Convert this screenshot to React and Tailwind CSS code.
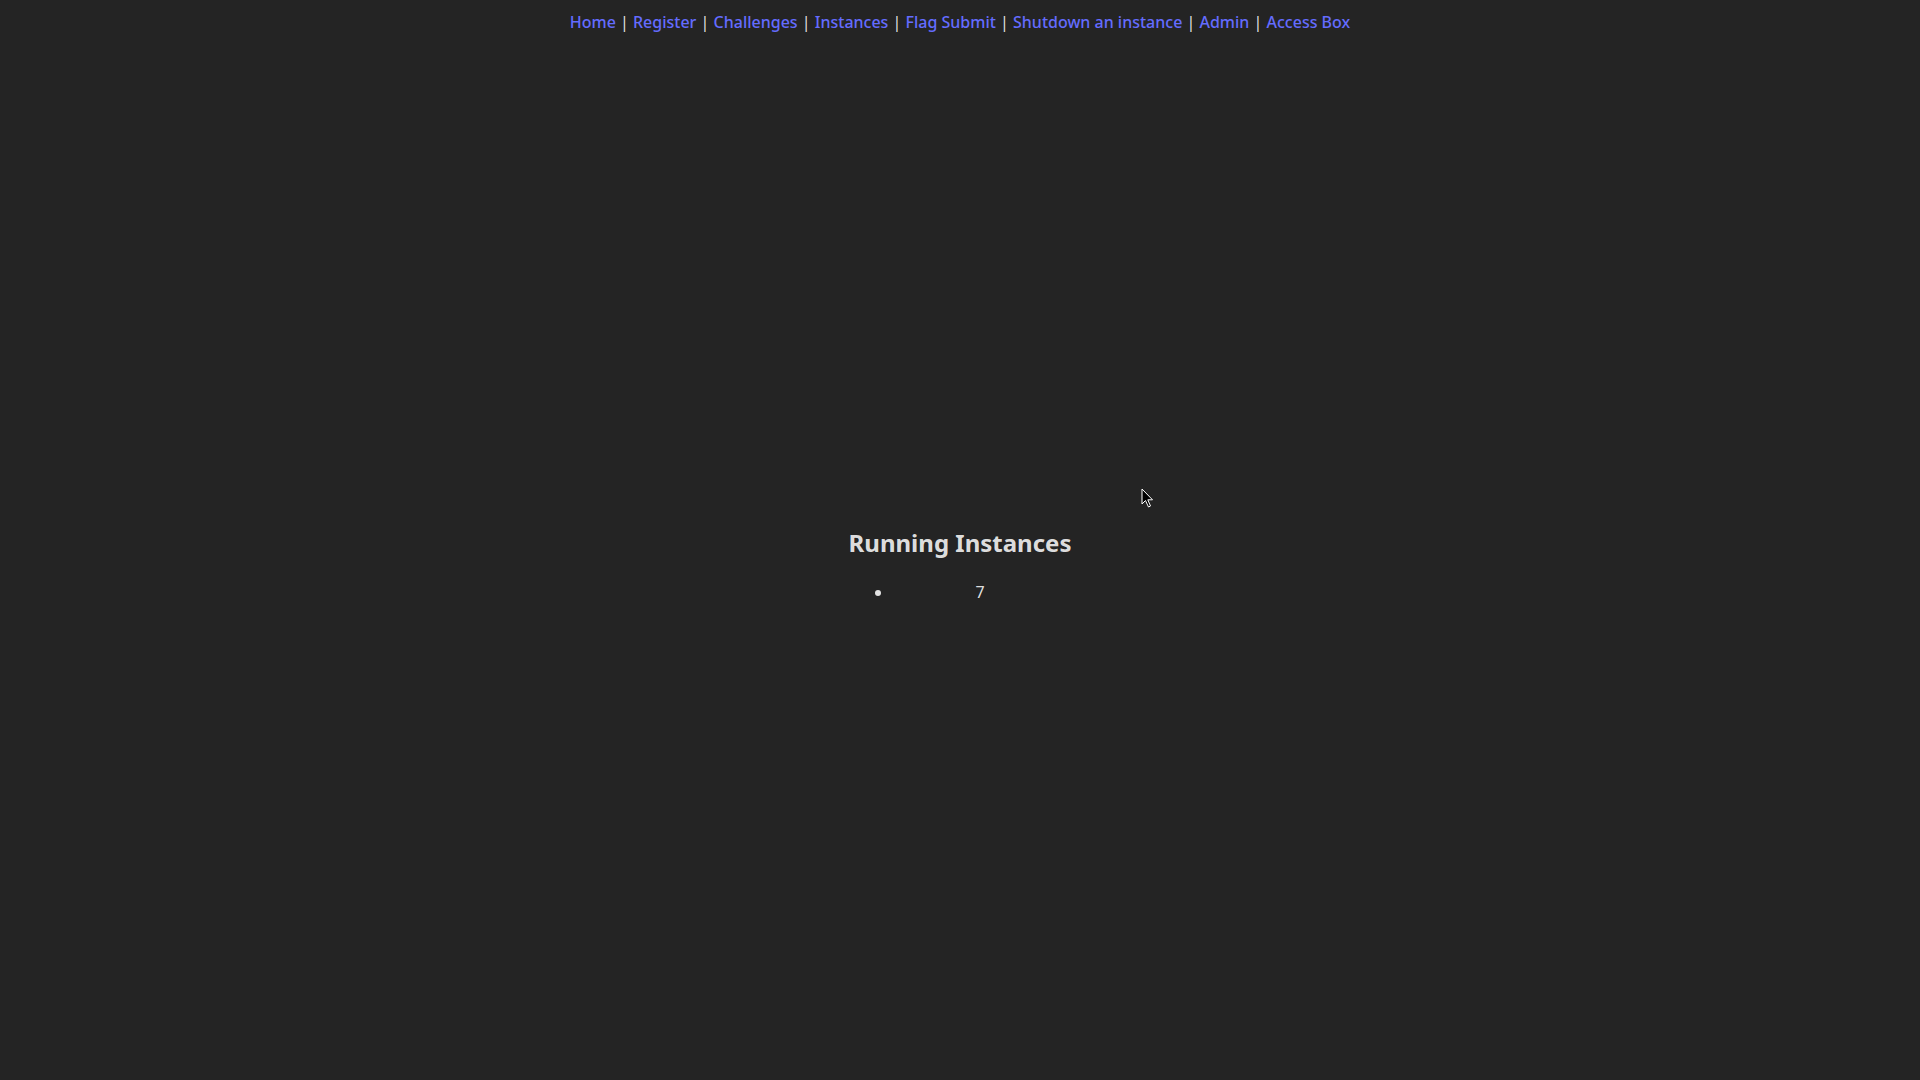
import React from "react";

const links = [
  "Home",
  "Register",
  "Challenges",
  "Instances",
  "Flag Submit",
  "Shutdown an instance",
  "Admin",
  "Access Box",
];

export default function App() {
  return (
    <div
      className="relative min-h-screen w-full bg-[#242424] text-[rgba(255,255,255,0.87)] flex flex-col"
      style={{ fontFamily: '"Noto Sans", "Open Sans", sans-serif' }}
    >
      <nav className="flex justify-center pt-[10px] text-[16px] leading-[24px]">
        {links.map((l, i) => (
          <span key={l} className="whitespace-pre">
            <a href="#" className="text-[#646cff] font-medium no-underline">
              {l}
            </a>
            {i < links.length - 1 ? " | " : ""}
          </span>
        ))}
      </nav>
      <div className="flex-1 flex items-center justify-center pt-[11px]">
        <div className="block text-center">
          <h2 className="text-[24px] font-bold leading-[1.5] mt-[20px] mb-[19px]">Running Instances</h2>
          <ul className="list-disc pl-[40px] my-[16px] text-[16px] leading-[24px]">
            <li className="mx-[4px]">7</li>
          </ul>
        </div>
      </div>
      <svg
        className="absolute left-[1141px] top-[488px]"
        width="14"
        height="22"
        viewBox="0 0 14 22"
      >
        <path
          d="M1 1 L1 16 L4.5 12.5 L7.5 19 L9.5 18 L6.8 11.8 L11.5 11.8 Z"
          fill="#000"
          stroke="#fff"
          strokeWidth="1"
          strokeLinejoin="round"
        />
      </svg>
    </div>
  );
}
